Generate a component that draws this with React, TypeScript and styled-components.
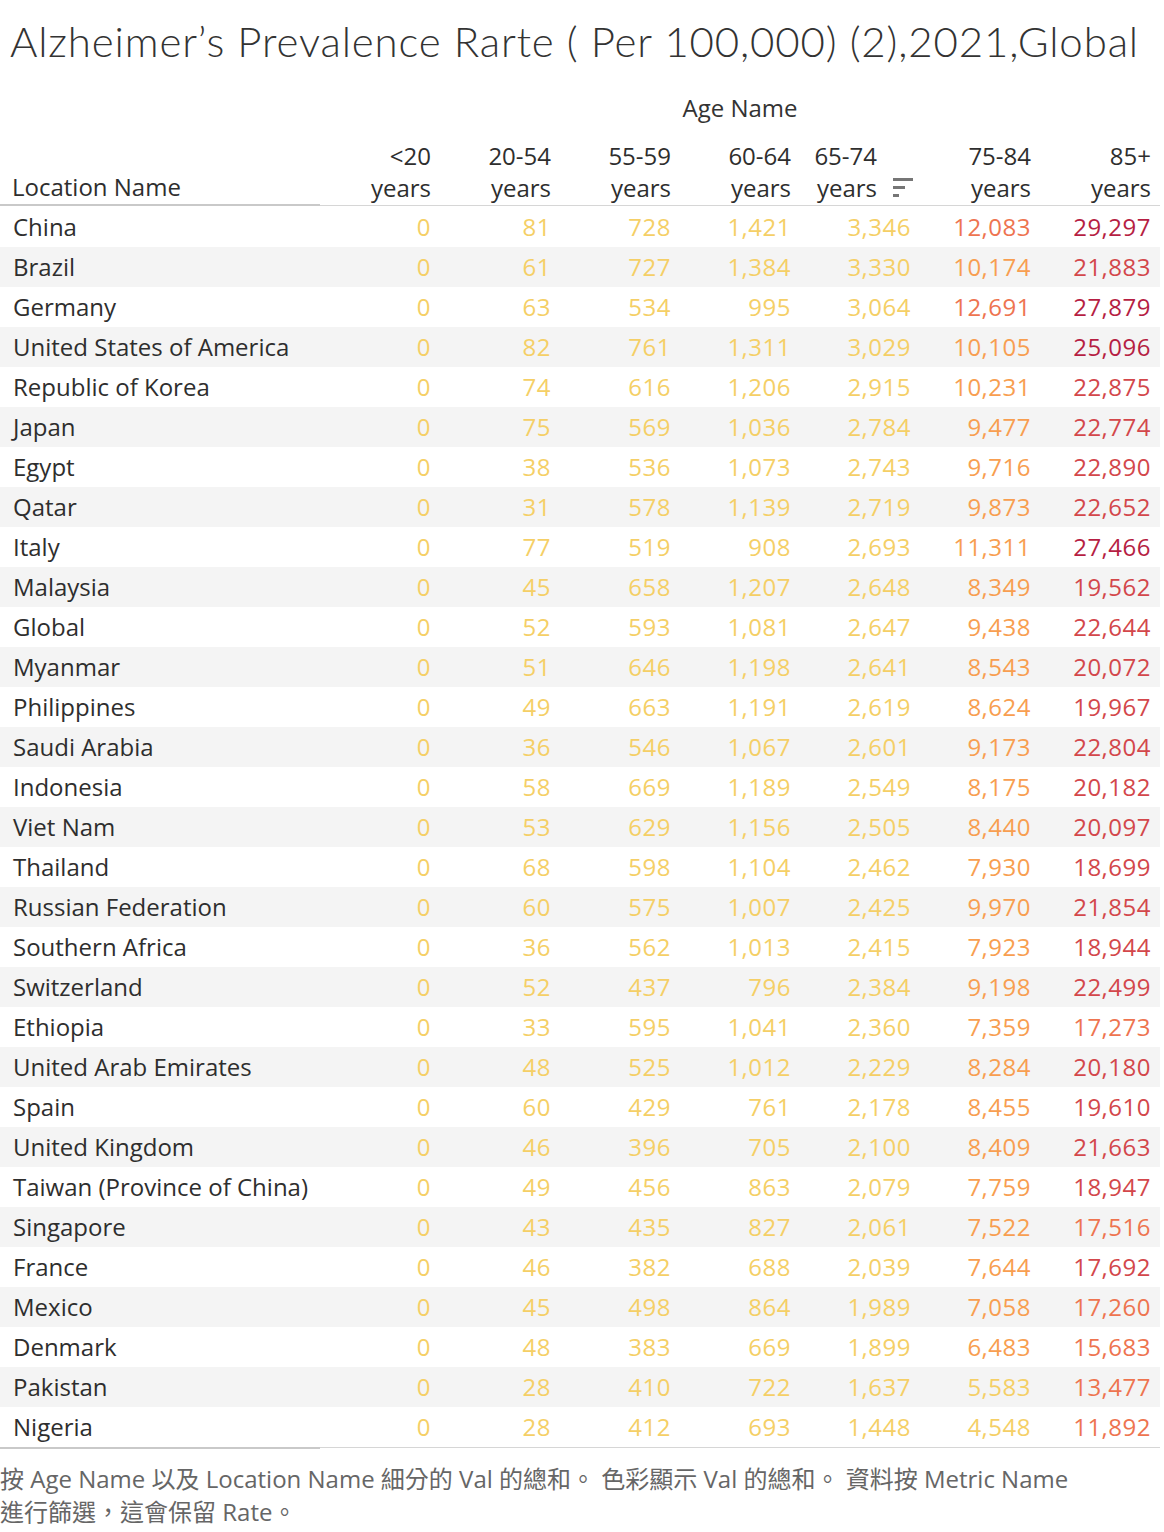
import React from "react";
import styled, { createGlobalStyle } from "styled-components";

const GlobalStyle = createGlobalStyle`
  html, body { margin: 0; padding: 0; background: #ffffff; }
  body { font-family: "Open Sans", "Noto Sans", sans-serif; color: #333333; }
`;

type Row = { name: string; vals: number[] };

const raw: [string, number[]][] = [
  ["China", [0, 81, 728, 1421, 3346, 12083, 29297]],
  ["Brazil", [0, 61, 727, 1384, 3330, 10174, 21883]],
  ["Germany", [0, 63, 534, 995, 3064, 12691, 27879]],
  ["United States of America", [0, 82, 761, 1311, 3029, 10105, 25096]],
  ["Republic of Korea", [0, 74, 616, 1206, 2915, 10231, 22875]],
  ["Japan", [0, 75, 569, 1036, 2784, 9477, 22774]],
  ["Egypt", [0, 38, 536, 1073, 2743, 9716, 22890]],
  ["Qatar", [0, 31, 578, 1139, 2719, 9873, 22652]],
  ["Italy", [0, 77, 519, 908, 2693, 11311, 27466]],
  ["Malaysia", [0, 45, 658, 1207, 2648, 8349, 19562]],
  ["Global", [0, 52, 593, 1081, 2647, 9438, 22644]],
  ["Myanmar", [0, 51, 646, 1198, 2641, 8543, 20072]],
  ["Philippines", [0, 49, 663, 1191, 2619, 8624, 19967]],
  ["Saudi Arabia", [0, 36, 546, 1067, 2601, 9173, 22804]],
  ["Indonesia", [0, 58, 669, 1189, 2549, 8175, 20182]],
  ["Viet Nam", [0, 53, 629, 1156, 2505, 8440, 20097]],
  ["Thailand", [0, 68, 598, 1104, 2462, 7930, 18699]],
  ["Russian Federation", [0, 60, 575, 1007, 2425, 9970, 21854]],
  ["Southern Africa", [0, 36, 562, 1013, 2415, 7923, 18944]],
  ["Switzerland", [0, 52, 437, 796, 2384, 9198, 22499]],
  ["Ethiopia", [0, 33, 595, 1041, 2360, 7359, 17273]],
  ["United Arab Emirates", [0, 48, 525, 1012, 2229, 8284, 20180]],
  ["Spain", [0, 60, 429, 761, 2178, 8455, 19610]],
  ["United Kingdom", [0, 46, 396, 705, 2100, 8409, 21663]],
  ["Taiwan (Province of China)", [0, 49, 456, 863, 2079, 7759, 18947]],
  ["Singapore", [0, 43, 435, 827, 2061, 7522, 17516]],
  ["France", [0, 46, 382, 688, 2039, 7644, 17692]],
  ["Mexico", [0, 45, 498, 864, 1989, 7058, 17260]],
  ["Denmark", [0, 48, 383, 669, 1899, 6483, 15683]],
  ["Pakistan", [0, 28, 410, 722, 1637, 5583, 13477]],
  ["Nigeria", [0, 28, 412, 693, 1448, 4548, 11892]],
];

const rows: Row[] = raw.map(([name, vals]) => ({ name, vals }));

const ages = ["<20", "20-54", "55-59", "60-64", "65-74", "75-84", "85+"];
const SORTED = 4;
const MAX = 29297;
const palette = ["#f5cf66", "#f89e50", "#ee7450", "#d3474b", "#b61e43"];
const colorFor = (v: number) => palette[Math.min(4, Math.floor((v / MAX) * 5))];
const fmt = (v: number) => v.toLocaleString("en-US");

const Page = styled.div`
  width: 1164px;
`;

const Title = styled.h1`
  margin: 0;
  padding: 14px 0 0 10px;
  height: 74px;
  box-sizing: border-box;
  font-family: "Lato", sans-serif;
  font-weight: 300;
  font-size: 42px;
  line-height: 54px;
  letter-spacing: 0.85px;
  color: #333333;
  white-space: nowrap;
`;

const Grid = styled.div`
  display: grid;
  grid-template-columns: 320px repeat(7, 120px);
  width: 1160px;
`;

const GroupLabel = styled.div`
  grid-column: 2 / span 7;
  text-align: center;
  font-size: 24px;
  font-weight: 500;
  line-height: 30px;
  height: 56px;
  padding-top: 19px;
  box-sizing: border-box;
`;

const GroupSpacer = styled.div`
  grid-column: 1;
`;

const HeadCell = styled.div<{ $left?: boolean }>`
  height: 76px;
  display: flex;
  align-items: flex-end;
  justify-content: ${(p) => (p.$left ? "flex-start" : "flex-end")};
  padding: 0 9px 1px ${(p) => (p.$left ? "12px" : "0")};
  box-sizing: border-box;
  font-size: 24px;
  font-weight: 500;
  line-height: 32px;
  color: #2e2e2e;
  text-align: right;
  border-bottom: ${(p) => (p.$left ? "2px solid #c9c9c9" : "1px solid #d6d6d6")};
  margin-bottom: ${(p) => (p.$left ? "0" : "1px")};
`;

const HeadText = styled.div`
  display: flex;
  flex-direction: column;
  align-items: flex-end;
`;

const SortIcon = styled.div`
  display: flex;
  flex-direction: column;
  gap: 5px;
  margin: 0 -2px 7px 16px;
  width: 20px;
  span {
    display: block;
    height: 3px;
    background: #767676;
  }
  span:nth-child(1) { width: 20px; }
  span:nth-child(2) { width: 12px; }
  span:nth-child(3) { width: 6px; }
`;

const NameCell = styled.div<{ $alt: boolean; $last: boolean }>`
  line-height: 40px;
  padding-left: 13px;
  font-size: 24px;
  font-weight: 500;
  color: #2e2e2e;
  background: ${(p) => (p.$alt ? "#f4f4f4" : "#ffffff")};
  white-space: nowrap;
  box-sizing: border-box;
  border-bottom: ${(p) => (p.$last ? "2px solid #c9c9c9" : "none")};
  height: ${(p) => (p.$last ? "42px" : "40px")};
`;

const ValCell = styled.div<{ $alt: boolean; $last: boolean }>`
  height: ${(p) => (p.$last ? "41px" : "40px")};
  line-height: 40px;
  padding-right: 9px;
  text-align: right;
  font-size: 24px;
  letter-spacing: 0.5px;
  background: ${(p) => (p.$alt ? "#f4f4f4" : "#ffffff")};
  box-sizing: border-box;
  border-bottom: ${(p) => (p.$last ? "1px solid #d6d6d6" : "none")};
`;

const Footer = styled.p`
  margin: 13px 0 0 0;
  font-family: "Open Sans", "Noto Sans CJK TC", sans-serif;
  font-weight: 400;
  font-size: 24px;
  line-height: 33px;
  color: #666666;
`;

export default function App() {
  return (
    <Page>
      <GlobalStyle />
      <Title>Alzheimer’s Prevalence Rarte ( Per 100,000) (2),2021,Global</Title>
      <Grid>
        <GroupSpacer />
        <GroupLabel>Age Name</GroupLabel>
        <HeadCell $left>Location Name</HeadCell>
        {ages.map((a, i) => (
          <HeadCell key={a}>
            <HeadText>
              <span>{a}</span>
              <span>years</span>
            </HeadText>
            {i === SORTED && (
              <SortIcon>
                <span />
                <span />
                <span />
              </SortIcon>
            )}
          </HeadCell>
        ))}
        {rows.map((r, ri) => {
          const alt = ri % 2 === 1;
          const last = ri === rows.length - 1;
          return (
            <React.Fragment key={r.name}>
              <NameCell $alt={alt} $last={last}>{r.name}</NameCell>
              {r.vals.map((v, vi) => (
                <ValCell key={vi} $alt={alt} $last={last} style={{ color: colorFor(v) }}>
                  {fmt(v)}
                </ValCell>
              ))}
            </React.Fragment>
          );
        })}
      </Grid>
      <Footer>
        按 Age Name 以及 Location Name 細分的 Val 的總和。 色彩顯示 Val 的總和。 資料按 Metric Name
        <br />
        進行篩選，這會保留 Rate。
      </Footer>
    </Page>
  );
}
